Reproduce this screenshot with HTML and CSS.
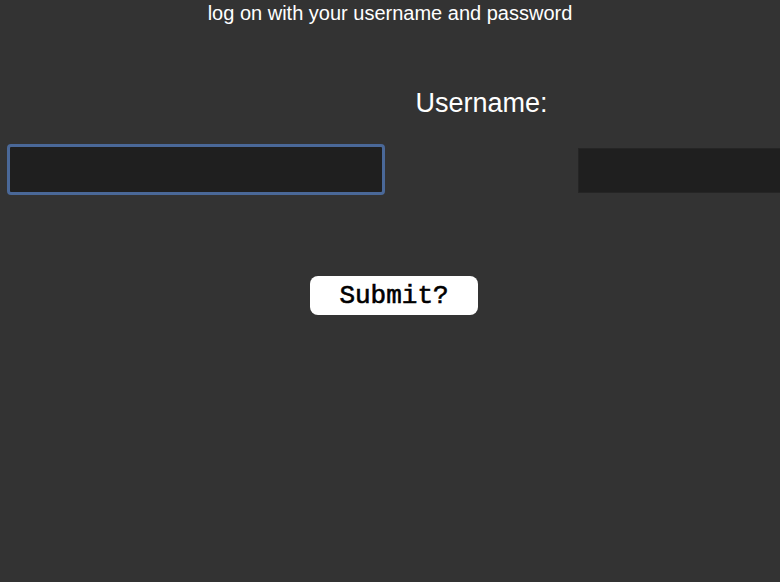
FILE: index.html
```html
<!DOCTYPE html>
<html>
<head>
<meta charset="utf-8">
<link rel="stylesheet" href="styles.css">
</head>
<body>
<p class="title">log on with your username and password</p>
<form class="login">
  <div class="row">
    <input class="field focused" type="text">
    <label class="label">Username:</label>
    <input class="field other" type="password">
  </div>
  <div class="actions">
    <button class="submit" type="button">Submit?</button>
  </div>
</form>
</body>
</html>
```
FILE: styles.css
```css
html, body {
  margin: 0;
  padding: 0;
  background: #333333;
  height: 100%;
  overflow: hidden;
}
.title {
  margin: 0;
  padding-top: 1px;
  font-family: "Liberation Sans", Arial, sans-serif;
  font-size: 20px;
  line-height: 24px;
  color: #ffffff;
  text-align: center;
}
.login {
  margin: 0;
}
.row {
  display: flex;
  align-items: flex-start;
  margin-top: 63px;
  padding-left: 7px;
}
.label {
  flex: 0 0 193px;
  text-align: center;
  font-family: "Liberation Sans", Arial, sans-serif;
  font-size: 27px;
  line-height: 30px;
  color: #ffffff;
}
.field {
  box-sizing: border-box;
  background: #1f1f1f;
  outline: none;
  margin: 0;
  padding: 0;
}
.focused {
  flex: 0 0 378px;
  height: 51px;
  margin-top: 56px;
  border: 3px solid #4a6898;
  border-radius: 4px;
}
.other {
  flex: 0 0 202px;
  height: 45px;
  margin-top: 60px;
  border: 1px solid #252525;
  border-right: none;
  border-radius: 0;
}
.actions {
  display: flex;
  justify-content: center;
  padding-left: 8px;
  margin-top: 81px;
}
.submit {
  box-sizing: border-box;
  width: 168px;
  height: 39px;
  background: #ffffff;
  border: none;
  border-radius: 8px;
  font-family: "Liberation Mono", "Courier New", monospace;
  font-size: 26px;
  font-weight: normal;
  -webkit-text-stroke: 0.6px #000000;
  color: #000000;
  padding: 0;
  cursor: pointer;
}
```
